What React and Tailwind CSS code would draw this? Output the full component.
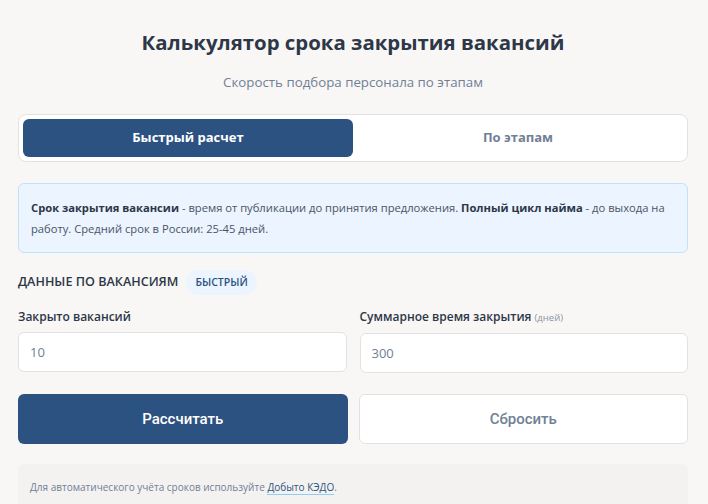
export default function App() {
  return (
    <div className="min-h-[504px] bg-[#f8f7f5] pl-[18px] pr-[20px] pt-[28px] font-['Open_Sans',sans-serif] text-[#2d3748]">
      <h1 className="text-center text-[20.4px] font-bold leading-[28px] text-[#2d3748]">
        Калькулятор срока закрытия вакансий
      </h1>
      <p className="mt-[17px] text-center text-[13.3px] leading-[18px] text-[#718096]">
        Скорость подбора персонала по этапам
      </p>

      <div className="mt-[23px] flex rounded-[8px] border border-[#e2e2e2] bg-white p-[4px]">
        <button className="h-[38px] flex-1 rounded-[6px] bg-[#2c5282] text-[13px] font-bold text-white">
          Быстрый расчет
        </button>
        <button className="h-[38px] flex-1 rounded-[6px] text-[13px] font-bold text-[#718096]">
          По этапам
        </button>
      </div>

      <div className="mt-[21px] rounded-[6px] border border-[#bee3f8] bg-[#ebf4ff] px-[12px] py-[13px] text-[11.2px] leading-[21px] text-[#4a5568]">
        <p>
          <b className="text-[#2d3748]">Срок закрытия вакансии</b> - время от публикации до принятия предложения.{' '}
          <b className="text-[#2d3748]">Полный цикл найма</b> - до выхода на работу. Средний срок в России: 25-45 дней.
        </p>
      </div>

      <div className="mt-[17px] flex items-center gap-[8px]">
        <span className="text-[12.6px] font-semibold uppercase text-[#2d3748]">Данные по вакансиям</span>
        <span className="rounded-full bg-[#ebf4ff] px-[9px] py-[5px] text-[10.5px] font-semibold uppercase leading-[15px] text-[#2c5282]">
          Быстрый
        </span>
      </div>

      <div className="mt-[13px] grid grid-cols-2 gap-[13px]">
        <label className="flex flex-col">
          <span className="text-[12px] font-semibold leading-[18px] text-[#2d3748]">Закрыто вакансий</span>
          <input
            defaultValue="10"
            className="mt-[6px] h-[40px] rounded-[6px] border border-[#e2e2e2] bg-white px-[11px] text-[13px] text-[#718096] outline-none"
          />
        </label>
        <label className="flex flex-col">
          <span className="text-[12px] font-semibold leading-[18px] text-[#2d3748]">
            Суммарное время закрытия <span className="text-[9.5px] font-normal text-[#8a94a6]">(дней)</span>
          </span>
          <input
            defaultValue="300"
            className="mt-[6px] h-[40px] rounded-[6px] border border-[#e2e2e2] bg-white px-[11px] text-[13px] text-[#718096] outline-none"
          />
        </label>
      </div>

      <div className="mt-[21px] grid grid-cols-2 gap-[11px]">
        <button className="h-[50px] rounded-[6px] bg-[#2c5282] font-['Roboto',sans-serif] text-[15px] font-medium text-white">
          Рассчитать
        </button>
        <button className="h-[50px] rounded-[6px] border border-[#e2e2e2] bg-white font-['Roboto',sans-serif] text-[15px] font-medium text-[#718096]">
          Сбросить
        </button>
      </div>

      <div className="mt-[20px] rounded-t-[6px] bg-[#f3f2f0] px-[12px] pt-[15px] pb-[14px] text-[10px] leading-[16px] text-[#718096]">
        Для автоматического учёта сроков используйте{' '}
        <a href="#" className="border-b border-[#90cdf4] text-[#2c5282]">Добыто КЭДО</a>.
      </div>
    </div>
  )
}
